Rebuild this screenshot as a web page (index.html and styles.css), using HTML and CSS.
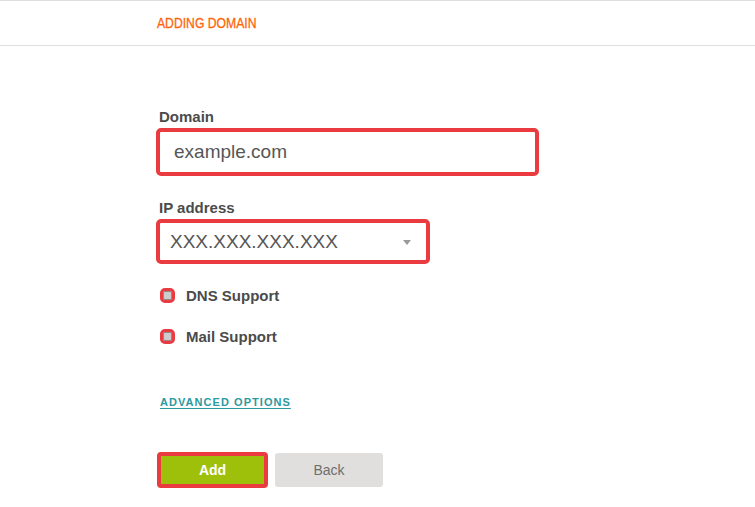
FILE: index.html
```html
<!DOCTYPE html>
<html>
<head>
<meta charset="utf-8">
<link rel="stylesheet" href="styles.css">
</head>
<body>
<header class="topbar">
  <h1 class="title">ADDING DOMAIN</h1>
</header>
<main class="form">
  <label class="label">Domain</label>
  <div class="field field-domain">example.com</div>

  <label class="label label-ip">IP address</label>
  <div class="field field-select">
    <span>XXX.XXX.XXX.XXX</span>
    <span class="caret"></span>
  </div>

  <div class="check check-first"><span class="box"></span><span>DNS Support</span></div>
  <div class="check"><span class="box"></span><span>Mail Support</span></div>

  <a class="advanced">ADVANCED OPTIONS</a>

  <div class="buttons">
    <button class="btn btn-add">Add</button>
    <button class="btn btn-back">Back</button>
  </div>
</main>
</body>
</html>
```

FILE: styles.css
```css
html, body {
  margin: 0;
  padding: 0;
  background: #fff;
  font-family: "Liberation Sans", Arial, sans-serif;
}

.topbar {
  height: 44px;
  border-top: 1px solid #dedede;
  border-bottom: 1px solid #dedede;
  padding-left: 157px;
  display: flex;
  align-items: center;
}

.title {
  margin: 0;
  font-size: 14px;
  font-weight: normal;
  color: #ff6508;
  display: inline-block;
  transform: scaleX(0.87);
  transform-origin: left center;
  -webkit-text-stroke: 0.3px #ff6508;
}

.form {
  padding: 62px 0 0 156px;
  display: flex;
  flex-direction: column;
  align-items: flex-start;
}

.label {
  display: block;
  font-size: 15px;
  line-height: 18px;
  font-weight: bold;
  color: #4b4b4b;
  margin-left: 3px;
  margin-bottom: 2px;
}

.label-ip {
  margin-top: 23px;
  margin-bottom: 2px;
}

.field {
  box-sizing: border-box;
  border: 4px solid #ea3b40;
  border-radius: 5px;
  font-size: 19px;
  color: #565656;
  display: flex;
  align-items: center;
}

.field-domain {
  width: 383px;
  height: 48px;
  padding-left: 14px;
}

.field-select {
  width: 274px;
  height: 45px;
  padding: 0 15px 0 10px;
  justify-content: space-between;
}

.caret {
  width: 0;
  height: 0;
  border-left: 4px solid transparent;
  border-right: 4px solid transparent;
  border-top: 5px solid #9a9a9a;
  margin-top: 2px;
}

.check {
  display: flex;
  align-items: center;
  height: 18px;
  font-size: 15px;
  font-weight: bold;
  color: #4b4b4b;
  margin-top: 23px;
  margin-left: 4px;
}

.check-first {
  margin-top: 22px;
}

.box {
  box-sizing: border-box;
  width: 15px;
  height: 15px;
  border: 3px solid #ea3b40;
  border-radius: 5px;
  background: #cdcdcd;
  box-shadow: inset 0 0 0 1px #8c8c8c;
  margin-right: 11px;
}

.advanced {
  margin-top: 50px;
  margin-left: 4px;
  font-size: 11px;
  line-height: 14px;
  font-weight: bold;
  letter-spacing: 1.05px;
  color: #2a9aa0;
  text-decoration: underline;
  text-underline-offset: 2px;
}

.buttons {
  margin-top: 43px;
  margin-left: 1px;
  display: flex;
  align-items: center;
  gap: 7px;
}

.btn {
  font-family: "Liberation Sans", Arial, sans-serif;
  font-size: 14px;
  cursor: pointer;
  box-sizing: border-box;
  padding: 0;
}

.btn-add {
  width: 111px;
  height: 36px;
  background: #9fc00a;
  border: 4px solid #ea3b40;
  border-radius: 4px;
  color: #fff;
  font-weight: bold;
}

.btn-back {
  width: 108px;
  height: 34px;
  background: #e0dfdd;
  border: none;
  border-radius: 3px;
  color: #6e6e6e;
}
```
